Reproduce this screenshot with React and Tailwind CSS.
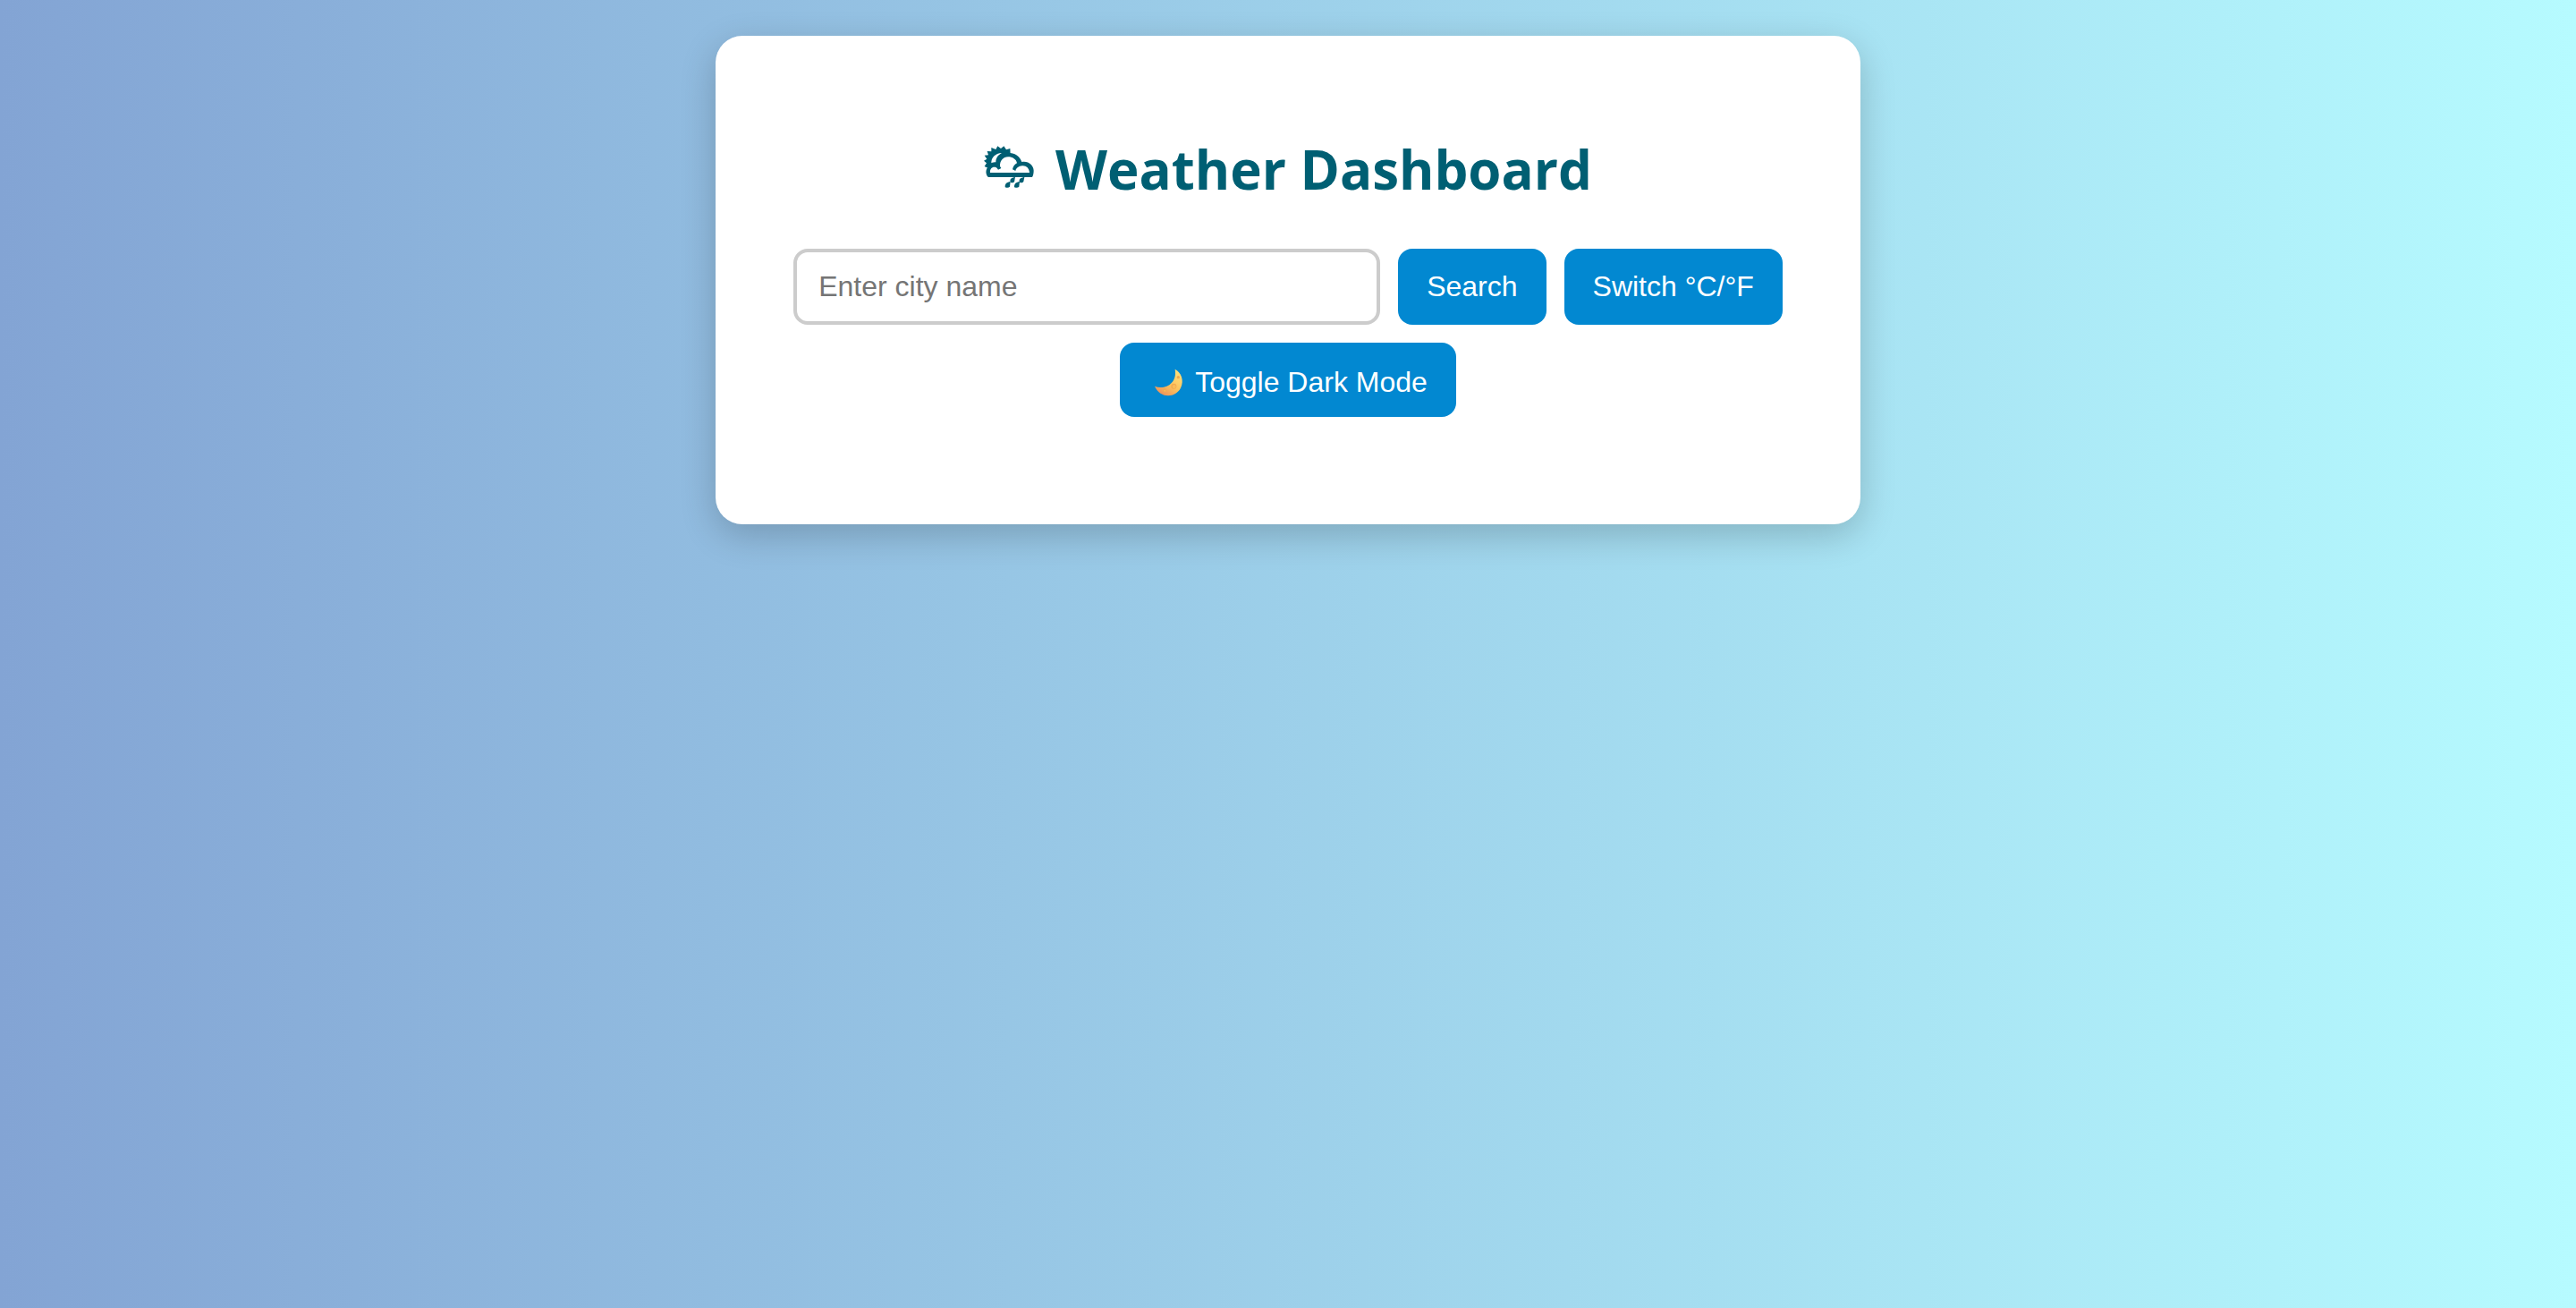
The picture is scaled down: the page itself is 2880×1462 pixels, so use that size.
import { useState } from "react";

function WeatherIcon() {
  return (
    <svg viewBox="69 63 168 144" className="mb-1 h-[48px] w-[56px] shrink-0" aria-hidden="true">
      <path
        fill="#005f73"
        d="M158 92 L157 72 L144 76 L136 64 L126 72 L115 64 L109 75 L94 69 L94 82 L80 81 L84 94 L71 95 L79 107 L69 113 L78 121 L71 132 L84 138 L130 130Z"
      />
      <path
        fill="#005f73"
        d="M84 168 C74 160 73 140 86 131 C92 126 101 122 109 124 C108 103 124 86 149 86 C173 86 190 97 196 117 C217 112 236 128 236 146 C236 155 234 163 231 168Z"
      />
      <path
        fill="#fff"
        d="M90 153 C88 140 98 131 109 135 C113 137 115 140 117 143 L127 138 C126 136 125 134 123 132 C122 113 134 100 150 100 C165 100 178 108 180 121 C172 125 167 133 165 142 L175 147 C177 138 185 131 198 130 C211 129 221 138 222 153Z"
      />
      <path fill="#fff" d="M94 121 C93 103 107 88 129 87 C116 94 109 104 109 118 C104 118 98 119 94 121Z" />
      <g fill="#005f73">
        <path d="M158 182 L156 200 Q152 204 145 203 L140 202 Q139 190 148 186Z" />
        <path d="M174 167 L171 184 Q166 189 158 185 Q155 175 163 171Z" />
        <path d="M189 182 L187 200 Q183 204 176 203 L171 202 Q170 190 179 186Z" />
        <path d="M205 167 L202 183 Q197 189 189 185 Q185 175 194 171Z" />
      </g>
    </svg>
  );
}

function MoonIcon() {
  return (
    <svg viewBox="15 24 132 120" className="h-[40px] w-[44px] shrink-0" aria-hidden="true">
      <defs>
        <linearGradient id="moon" x1="0.9" y1="0.1" x2="0.3" y2="1">
          <stop offset="0" stopColor="#ffe07a" />
          <stop offset="0.55" stopColor="#fcc35e" />
          <stop offset="1" stopColor="#f0935a" />
        </linearGradient>
      </defs>
      <path fill="url(#moon)" d="M104 41 C124 51 136 78 123 104 C106 137 55 141 36 98 C68 112 113 90 104 41Z" />
      <g fill="#f2a94f">
        <circle cx="100" cy="98" r="9" />
        <circle cx="69" cy="112" r="6" />
        <circle cx="115" cy="68" r="5" />
      </g>
      <g fill="#fbbd5b">
        <circle cx="101" cy="99" r="6" />
        <circle cx="70" cy="113" r="3" />
      </g>
    </svg>
  );
}

const button =
  "flex items-center justify-center rounded-2xl bg-[#0288d1] px-8 text-[32px] leading-[37px] text-white cursor-pointer";

export default function App() {
  const [city, setCity] = useState("");

  return (
    <div className="min-h-screen bg-linear-to-r/srgb from-[#83a4d4] to-[#b6fbff] px-5 py-10 font-['Liberation_Sans',Arial,sans-serif]">
      <main className="mx-auto max-w-[1280px] rounded-[30px] bg-white px-20 pt-[108px] pb-[120px] shadow-[0_12px_40px_rgba(0,0,0,0.2)]">
        <h1 className="flex items-center justify-center gap-6 font-['Open_Sans','Noto_Sans',sans-serif] text-[60px] leading-[82px] font-bold text-[#005f73]">
          <WeatherIcon />
          Weather Dashboard
        </h1>
        <div className="mt-12 flex flex-wrap justify-center gap-5">
          <input
            type="text"
            aria-label="City name"
            placeholder="Enter city name"
            value={city}
            onChange={(e) => setCity(e.target.value)}
            className="w-[656px] max-w-full rounded-2xl border-4 border-[#ccc] bg-white px-6 py-5 text-[32px] leading-[37px] placeholder:text-[#757575]"
          />
          <button type="button" className={button}>
            Search
          </button>
          <button type="button" className={button}>
            Switch °C/°F
          </button>
          <button type="button" className={`${button} gap-2 pt-6 pb-[19px]`}>
            <MoonIcon />
            Toggle Dark Mode
          </button>
        </div>
      </main>
    </div>
  );
}
